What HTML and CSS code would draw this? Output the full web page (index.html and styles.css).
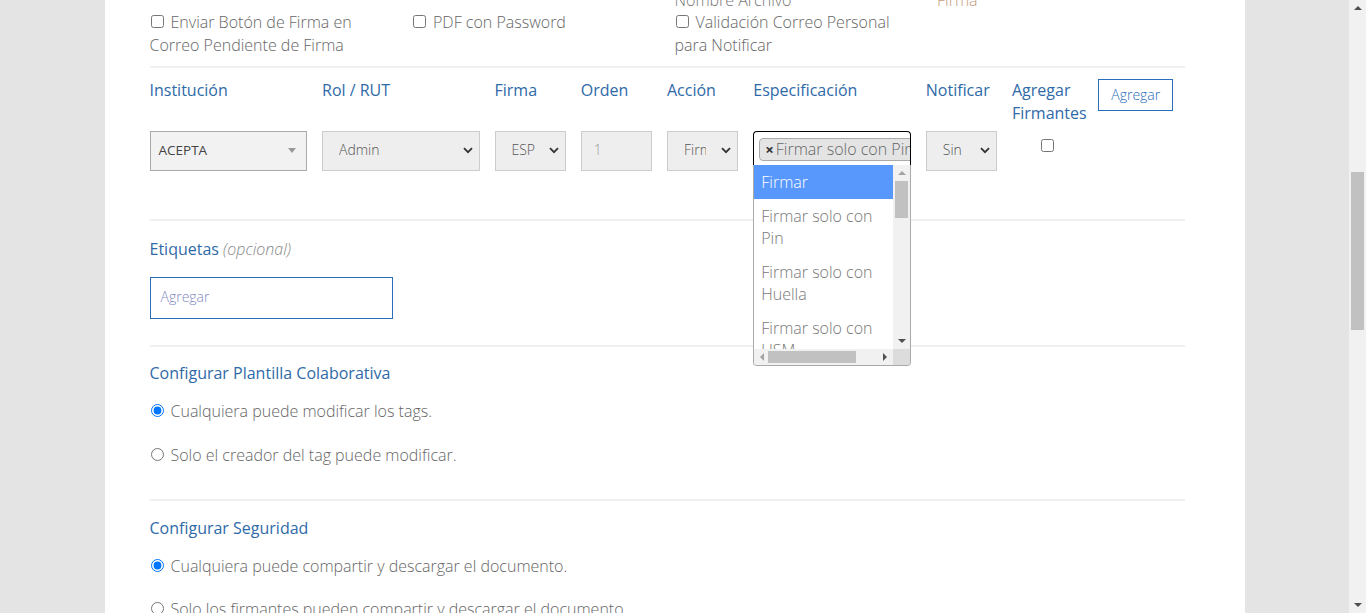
FILE: index.html
```html
<!DOCTYPE html>
<html lang="es">
<head>
<meta charset="utf-8">
<title>Firmantes</title>
<link rel="stylesheet" href="styles.css">
</head>
<body>
<div class="screen">
  <div class="viewport">
    <div class="panel">
      <div class="content">
        <div class="row4 prev">
          <div></div>
          <div></div>
          <div class="txt">Nombre Archivo</div>
          <div class="txt warm">Firma</div>
        </div>
        <div class="row4">
          <label class="chk"><input type="checkbox">Enviar Botón de Firma en Correo Pendiente de Firma</label>
          <label class="chk"><input type="checkbox">PDF con Password</label>
          <label class="chk"><input type="checkbox">Validación Correo Personal para Notificar</label>
          <div></div>
        </div>

        <div class="rule rule-1"></div>

        <div class="signers">
          <div class="lbl">Institución</div>
          <div class="lbl">Rol / RUT</div>
          <div class="lbl">Firma</div>
          <div class="lbl">Orden</div>
          <div class="lbl">Acción</div>
          <div class="lbl">Especificación</div>
          <div class="lbl">Notificar</div>
          <div class="lbl">Agregar Firmantes</div>
          <div class="cell"><button class="btn-add">Agregar</button></div>

          <div class="cell">
            <div class="s2-single">
              <span class="s2-text">ACEPTA</span>
              <span class="s2-arrow"></span>
            </div>
          </div>
          <div class="cell">
            <div class="sel"><span class="sel-text">Admin</span><svg class="chev" viewBox="0 0 10 7" width="10" height="7"><path d="M1 1.2 L5 5.2 L9 1.2" fill="none" stroke="#333" stroke-width="1.8"/></svg></div>
          </div>
          <div class="cell">
            <div class="sel"><span class="sel-text">ESP</span><svg class="chev" viewBox="0 0 10 7" width="10" height="7"><path d="M1 1.2 L5 5.2 L9 1.2" fill="none" stroke="#333" stroke-width="1.8"/></svg></div>
          </div>
          <div class="cell">
            <div class="inp-num">1</div>
          </div>
          <div class="cell">
            <div class="sel"><span class="sel-text clip">Firmar</span><svg class="chev" viewBox="0 0 10 7" width="10" height="7"><path d="M1 1.2 L5 5.2 L9 1.2" fill="none" stroke="#333" stroke-width="1.8"/></svg></div>
          </div>
          <div class="cell spec">
            <div class="s2-multi">
              <span class="chip"><span class="chip-x">×</span>Firmar solo con Pin</span>
            </div>
            <div class="dropdown">
              <div class="dd-body">
                <ul class="dd-list">
                  <li class="dd-opt active">Firmar</li>
                  <li class="dd-opt">Firmar solo con Pin</li>
                  <li class="dd-opt">Firmar solo con Huella</li>
                  <li class="dd-opt">Firmar solo con USM</li>
                </ul>
                <div class="dd-vbar">
                  <span class="arr up light"></span>
                  <span class="dd-vthumb"></span>
                  <span class="dd-vfill"></span>
                  <span class="arr down"></span>
                </div>
              </div>
              <div class="dd-foot">
                <div class="dd-hbar">
                  <span class="arr left light"></span>
                  <span class="dd-hthumb"></span>
                  <span class="dd-hfill"></span>
                  <span class="arr right"></span>
                </div>
                <div class="dd-corner"></div>
              </div>
            </div>
          </div>
          <div class="cell">
            <div class="sel"><span class="sel-text">Sin</span><svg class="chev" viewBox="0 0 10 7" width="10" height="7"><path d="M1 1.2 L5 5.2 L9 1.2" fill="none" stroke="#333" stroke-width="1.8"/></svg></div>
          </div>
          <div class="cell center"><input type="checkbox" class="chk-solo"></div>
          <div class="cell"></div>
        </div>

        <div class="rule rule-2"></div>

        <div class="section-title tags-title">Etiquetas <em>(opcional)</em></div>
        <div class="tags-input">Agregar</div>

        <div class="rule rule-3"></div>

        <div class="section-title">Configurar Plantilla Colaborativa</div>
        <label class="radio first"><input type="radio" name="tpl" checked>Cualquiera puede modificar los tags.</label>
        <label class="radio second"><input type="radio" name="tpl">Solo el creador del tag puede modificar.</label>

        <div class="rule rule-4"></div>

        <div class="section-title">Configurar Seguridad</div>
        <label class="radio first"><input type="radio" name="sec" checked>Cualquiera puede compartir y descargar el documento.</label>
        <label class="radio second"><input type="radio" name="sec">Solo los firmantes pueden compartir y descargar el documento.</label>
      </div>
    </div>
  </div>
  <div class="page-scroll">
    <span class="arr up dark"></span>
    <span class="ps-thumb"></span>
    <span class="ps-fill"></span>
    <span class="arr down dark"></span>
  </div>
</div>
</body>
</html>
```

FILE: styles.css
```css
* { box-sizing: border-box; }

html, body {
  margin: 0;
  padding: 0;
  height: 613px;
  overflow: hidden;
}

body {
  background: #e4e4e4;
  font-family: "Open Sans", "Liberation Sans", sans-serif;
  font-size: 16px;
  line-height: 22.86px;
  color: #666;
}

.screen {
  display: flex;
  height: 613px;
}

.viewport {
  flex: 1;
  height: 613px;
  overflow: hidden;
}

.panel {
  width: 1140px;
  margin: 0 auto;
  background: #fff;
  min-height: 613px;
  padding: 0 45px;
}

.content {
  margin-top: -11.5px;
  width: 1050px;
}

/* top options */
.row4 {
  display: grid;
  grid-template-columns: repeat(4, 262.5px);
}
.row4 > * { padding-right: 15px; }

.txt { color: #777; font-weight: 300; }
.txt.warm { color: #c49a7e; }

.chk {
  display: block;
  color: #666;
  font-weight: 300;
}
.chk input, .radio input {
  width: 13px;
  height: 13px;
  margin: 0 7px 0 1px;
  vertical-align: 0;
}

.rule {
  height: 2px;
  background: #f0f0f0;
  width: 1035px;
}
.rule-1 { margin-top: 8.5px; }
.rule-2 { margin-top: 48.5px; }
.rule-3 { margin-top: 26px; }
.rule-4 { margin-top: 32.6px; }

/* signers grid */
.signers {
  width: 1035px;
  margin-top: 11.5px;
  display: grid;
  grid-template-columns: 172.5px 172.5px 86.25px 86.25px 86.25px 172.5px 86.25px 86.25px 86.25px;
  grid-template-rows: 45.7px 40px;
  row-gap: 6px;
}
.signers > * { padding-right: 15px; min-width: 0; }

.lbl { color: #2f6aa8; }

.cell.center {
  display: flex;
  justify-content: center;
  align-items: flex-start;
}
.chk-solo {
  width: 13px;
  height: 13px;
  margin: 8px 0 0 0;
}

.btn-add {
  font-family: "Open Sans", "Liberation Sans", sans-serif;
  font-size: 14px;
  font-weight: 300;
  line-height: 20px;
  color: #2a6ebb;
  background: #fff;
  border: 1px solid #2a6ebb;
  border-radius: 0;
  padding: 5px 12px;
  margin-top: -0.5px;
  white-space: nowrap;
}

.s2-single {
  height: 40px;
  background: #f2f2f2;
  border: 1px solid #aaa;
  display: flex;
  align-items: center;
  padding: 0 8px;
  font-size: 13.5px;
  color: #444;
}
.s2-text { flex: 1; }
.s2-arrow {
  width: 0;
  height: 0;
  border-style: solid;
  border-width: 5px 4px 0 4px;
  border-color: #999 transparent transparent transparent;
  margin-right: 2px;
}

.sel {
  height: 40px;
  background: #eee;
  border: 1px solid #ccc;
  display: flex;
  align-items: center;
  padding: 0 6px 0 16px;
  font-size: 14px;
  font-weight: 300;
  color: #555;
}
.sel-text {
  flex: 1;
  white-space: nowrap;
  overflow: hidden;
}
.sel-text.clip {
  flex: 0 0 22px;
  margin-right: auto;
}
.chev { flex: none; }

.inp-num {
  height: 40px;
  background: #eee;
  border: 1px solid #ccc;
  padding: 0 12px;
  display: flex;
  align-items: center;
  font-size: 14px;
  font-weight: 300;
  color: #999;
}

/* select2 multi + dropdown */
.spec { position: relative; }
.s2-multi {
  height: 34px;
  border: 1px solid #000;
  border-bottom: none;
  border-radius: 4px 4px 0 0;
  background: #fff;
  overflow: hidden;
  white-space: nowrap;
  padding: 6px 0 0 5px;
}
.chip {
  display: inline-block;
  height: 23px;
  line-height: 20px;
  background: #e4e4e4;
  border: 1px solid #aaa;
  border-radius: 4px;
  padding: 0 5px;
  color: #666;
  font-size: 16px;
  font-weight: 300;
}
.chip-x {
  color: #333;
  font-weight: bold;
  margin-right: 2px;
  font-size: 15px;
}

.dropdown {
  position: absolute;
  top: 34px;
  left: 0;
  width: 158px;
  height: 201px;
  border: 1px solid #aaa;
  border-top: none;
  border-radius: 0 0 4px 4px;
  background: #fff;
  overflow: hidden;
  z-index: 5;
  display: flex;
  flex-direction: column;
}
.dd-body {
  display: flex;
  height: 184px;
}
.dd-list {
  list-style: none;
  margin: 0;
  padding: 0;
  flex: 1;
  overflow: hidden;
}
.dd-opt {
  padding: 6px 6px 6px 7px;
  line-height: 22px;
  color: #777;
  font-weight: 300;
}
.dd-opt.active {
  background: #5897fb;
  color: #fff;
}
.dd-vbar {
  width: 17px;
  background: #f1f1f1;
  display: flex;
  flex-direction: column;
  align-items: center;
}
.dd-vthumb {
  width: 13px;
  height: 37px;
  background: #c1c1c1;
}
.dd-vfill { flex: 1; }
.dd-foot {
  display: flex;
  height: 16px;
}
.dd-hbar {
  flex: 1;
  background: #f1f1f1;
  display: flex;
  align-items: center;
}
.dd-hthumb {
  width: 88px;
  height: 12px;
  background: #c1c1c1;
}
.dd-hfill { flex: 1; }
.dd-corner {
  width: 17px;
  background: #dcdcdc;
}

/* scrollbar arrows */
.arr {
  display: block;
  width: 0;
  height: 0;
  border-style: solid;
  flex: none;
}
.arr.up {
  border-width: 0 4px 4px 4px;
  border-color: transparent transparent #505050 transparent;
  margin: 6px 0 6px;
}
.arr.down {
  border-width: 4px 4px 0 4px;
  border-color: #505050 transparent transparent transparent;
  margin: 6px 0 6px;
}
.arr.left {
  border-width: 4px 4px 4px 0;
  border-color: transparent #505050 transparent transparent;
  margin: 0 4px 0 6px;
}
.arr.right {
  border-width: 4px 0 4px 4px;
  border-color: transparent transparent transparent #505050;
  margin: 0 6px 0 4px;
}
.arr.up.light { border-bottom-color: #a3a3a3; }
.arr.left.light { border-right-color: #a3a3a3; }

/* sections */
.section-title {
  color: #2f6aa8;
  margin-top: 15.6px;
}
.section-title em {
  color: #888;
  font-style: italic;
  font-weight: 300;
}
.tags-title { margin-top: 17.1px; }
.tags-input {
  width: 243px;
  height: 42px;
  margin-top: 15.6px;
  border: 1px solid #2a6ebb;
  padding: 0 10px;
  display: flex;
  align-items: center;
  font-size: 14px;
  font-weight: 300;
  color: #7f88c2;
}
.radio {
  display: block;
  color: #666;
  font-weight: 300;
}
.radio.first { margin-top: 15.2px; }
.radio.second { margin-top: 20.2px; }

/* page scrollbar */
.page-scroll {
  width: 17px;
  height: 613px;
  background: #f1f1f1;
  display: flex;
  flex-direction: column;
  align-items: center;
}
.page-scroll .arr.up { margin: 6px 0 7px; }
.ps-thumb {
  width: 13px;
  height: 158px;
  background: #c1c1c1;
  margin-top: 155px;
}
.ps-fill { flex: 1; }
.page-scroll .arr.down { margin: 0 0 6px; }
```
